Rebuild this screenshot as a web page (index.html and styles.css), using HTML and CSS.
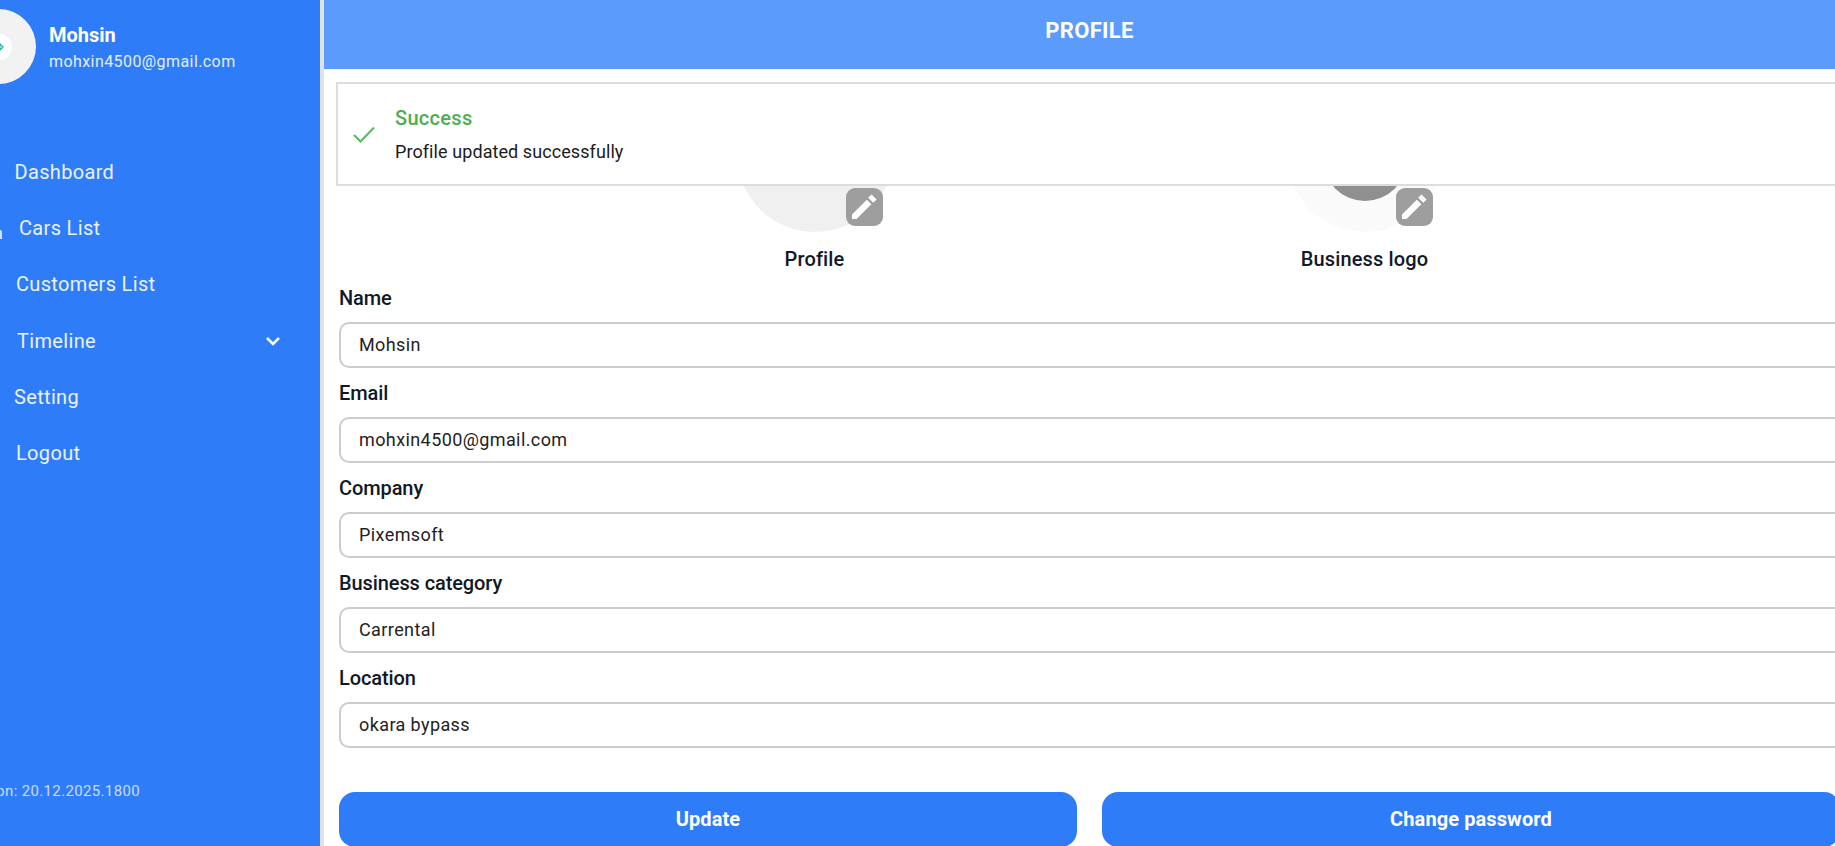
FILE: index.html
```html
<!DOCTYPE html>
<html lang="en">
<head>
  <meta charset="UTF-8">
  <meta name="viewport" content="width=device-width, initial-scale=1.0">
  <title>Profile</title>
  <link rel="stylesheet" href="styles.css">
</head>
<body>
  <aside class="sidebar">
    <div class="user">
      <div class="user-avatar">
        <div class="user-logo">
          <svg viewBox="0 0 10 10" width="10" height="10"><path d="M1 4h5V2l3 3-3 3V6H1z" fill="none" stroke="#2bbdb4" stroke-width="1.4"/></svg>
        </div>
      </div>
      <div>
        <div class="user-name">Mohsin</div>
        <div class="user-email">mohxin4500@gmail.com</div>
      </div>
    </div>
    <nav class="nav">
      <a class="nav-item pad-15">Dashboard</a>
      <a class="nav-item pad-19"><span class="car-stub"></span>Cars List</a>
      <a class="nav-item pad-16">Customers List</a>
      <a class="nav-item pad-17">Timeline
        <svg class="chevron" viewBox="0 0 24 24" width="24" height="24"><path d="M6 9l6 6 6-6" fill="none" stroke="#fff" stroke-width="2.6"/></svg>
      </a>
      <a class="nav-item pad-14">Setting</a>
      <a class="nav-item pad-16">Logout</a>
    </nav>
    <div class="version"><span>Version: 20.12.2025.1800</span></div>
  </aside>

  <main class="main">
    <header class="topbar">PROFILE</header>

    <div class="alert-wrap">
      <div class="alert">
        <svg class="alert-check" viewBox="0 0 22 17" width="22" height="17"><path d="M1 9l6.5 6.5L21 1.5" fill="none" stroke="#5cb860" stroke-width="2"/></svg>
        <div>
          <div class="alert-title">Success</div>
          <div class="alert-text">Profile updated successfully</div>
        </div>
      </div>
    </div>

    <div class="content">
      <div class="photos">
        <div class="photo">
          <div class="photo-circle">
            <button class="photo-edit">
              <svg viewBox="0 0 24 24" width="32" height="32"><path d="M3 17.6V21h3.4L17.5 9.9l-3.4-3.4zM15.13 5.06l2.5-2.5 3.8 3.8-2.5 2.5z" fill="#fff"/></svg>
            </button>
          </div>
          <div class="photo-label">Profile</div>
        </div>
        <div class="photo">
          <div class="photo-circle logo">
            <div class="logo-inner"></div>
            <button class="photo-edit">
              <svg viewBox="0 0 24 24" width="32" height="32"><path d="M3 17.6V21h3.4L17.5 9.9l-3.4-3.4zM15.13 5.06l2.5-2.5 3.8 3.8-2.5 2.5z" fill="#fff"/></svg>
            </button>
          </div>
          <div class="photo-label">Business logo</div>
        </div>
      </div>

      <form class="form">
        <div class="field">
          <label>Name</label>
          <input type="text" value="Mohsin">
        </div>
        <div class="field">
          <label>Email</label>
          <input type="text" value="mohxin4500@gmail.com">
        </div>
        <div class="field">
          <label>Company</label>
          <input type="text" value="Pixemsoft">
        </div>
        <div class="field">
          <label>Business category</label>
          <input type="text" value="Carrental">
        </div>
        <div class="field">
          <label>Location</label>
          <input type="text" value="okara bypass">
        </div>
        <div class="actions">
          <button type="button" class="btn">Update</button>
          <button type="button" class="btn">Change password</button>
        </div>
      </form>
    </div>
  </main>
</body>
</html>
```

FILE: styles.css
```css
* {
  box-sizing: border-box;
}

html, body {
  height: 846px;
  overflow: hidden;
}

body {
  margin: 0;
  display: flex;
  font-family: 'Roboto', sans-serif;
  background: #fff;
}

/* sidebar */
.sidebar {
  flex: 0 0 324px;
  height: 846px;
  background: #2f7cf8;
  border-right: 4px solid #e2e2e2;
  color: #fff;
  display: flex;
  flex-direction: column;
  overflow: hidden;
}

.user {
  display: flex;
  align-items: center;
  gap: 13px;
  padding-top: 9px;
  margin-left: -39px;
}

.user-avatar {
  width: 75px;
  height: 75px;
  flex: none;
  border-radius: 50%;
  background: #f2f2f2;
  display: flex;
  align-items: center;
  justify-content: center;
}

.user-logo {
  width: 26px;
  height: 26px;
  border-radius: 50%;
  background: #fff;
  display: flex;
  align-items: center;
  justify-content: center;
}

.user-name {
  font-size: 20px;
  font-weight: 700;
  margin-bottom: 5px;
}

.user-email {
  font-size: 16px;
  letter-spacing: 0.42px;
  color: #e3edfe;
}

.nav {
  margin-top: 60px;
}

.nav-item {
  height: 56.2px;
  display: flex;
  align-items: center;
  font-size: 20px;
  letter-spacing: 0.33px;
  color: #eaf2ff;
  position: relative;
}

.pad-14 { padding-left: 14px; }
.pad-15 { padding-left: 14.5px; }
.pad-16 { padding-left: 16px; }
.pad-17 { padding-left: 17px; }
.pad-19 { padding-left: 19px; }

.car-stub {
  position: absolute;
  left: 0;
  top: 30px;
  width: 2px;
  height: 9px;
  border-radius: 0 2px 0 0;
  background: #cfe0fd;
}

.chevron {
  position: absolute;
  left: 261px;
  top: 16px;
}

.version {
  margin-top: auto;
  height: 64px;
  padding-right: 180px;
  display: flex;
  justify-content: flex-end;
  white-space: nowrap;
  font-size: 15px;
  letter-spacing: 0.35px;
  color: #c8dcfd;
}

/* main */
.main {
  flex: 0 0 1531px;
  position: relative;
}

.topbar {
  height: 69px;
  background: #5b9bfb;
  color: #fff;
  font-size: 22px;
  font-weight: 700;
  letter-spacing: 0.3px;
  display: flex;
  align-items: center;
  justify-content: center;
  padding-bottom: 9px;
}

.alert-wrap {
  position: absolute;
  left: 0;
  right: 0;
  top: 69px;
  padding: 13px 10px 0 12px;
  background: #fff;
  z-index: 2;
}

.alert {
  height: 104px;
  background: #fff;
  border: 2px solid #ddd;
  display: flex;
  align-items: center;
  gap: 20px;
  padding-left: 15px;
}

.alert-title {
  font-size: 20px;
  font-weight: 500;
  letter-spacing: 0.3px;
  color: #4caf50;
  margin-bottom: 11px;
}

.alert-text {
  font-size: 18px;
  letter-spacing: 0.08px;
  color: #1c1c1c;
}

.content {
  padding: 7px 15px 0;
}

.photos {
  display: flex;
  justify-content: center;
}

.photo {
  width: 550px;
  display: flex;
  flex-direction: column;
  align-items: center;
}

.photo-circle {
  width: 156px;
  height: 156px;
  border-radius: 50%;
  background: #f0f0f0;
  position: relative;
}

.photo-circle.logo {
  background: #fafafa;
}

.logo-inner {
  position: absolute;
  left: 36px;
  top: 41px;
  width: 84px;
  height: 84px;
  border-radius: 50%;
  background: #909090;
}

.photo-edit {
  position: absolute;
  right: 10px;
  bottom: 6px;
  width: 37px;
  height: 38px;
  padding: 0;
  border: none;
  border-radius: 9px;
  background: #9e9e9e;
  display: flex;
  align-items: center;
  justify-content: center;
}

.photo-label {
  margin-top: 15px;
  font-size: 20px;
  font-weight: 500;
  letter-spacing: 0.15px;
  color: #111827;
}

.form {
  display: flex;
  flex-direction: column;
  margin-top: 2px;
}

.field {
  display: flex;
  flex-direction: column;
  margin-top: 13px;
}

.field label {
  font-size: 20px;
  font-weight: 500;
  line-height: 24px;
  letter-spacing: -0.1px;
  color: #111827;
  margin-bottom: 12px;
}

/* inputs run past the right edge of the window */
.field input {
  height: 46px;
  margin-right: -15px;
  padding: 0 18px 2px;
  border: 2px solid #ccc;
  border-radius: 10px;
  font-family: inherit;
  font-size: 18px;
  letter-spacing: 0.4px;
  color: #222;
  background: #fff;
}

.actions {
  display: flex;
  gap: 25px;
  margin-top: 43.5px;
}

.btn {
  flex: 1;
  height: 55px;
  border: none;
  border-radius: 16px;
  background: #2f7cf8;
  color: #fff;
  font-family: inherit;
  font-size: 20px;
  font-weight: 700;
  letter-spacing: 0.1px;
}
```
